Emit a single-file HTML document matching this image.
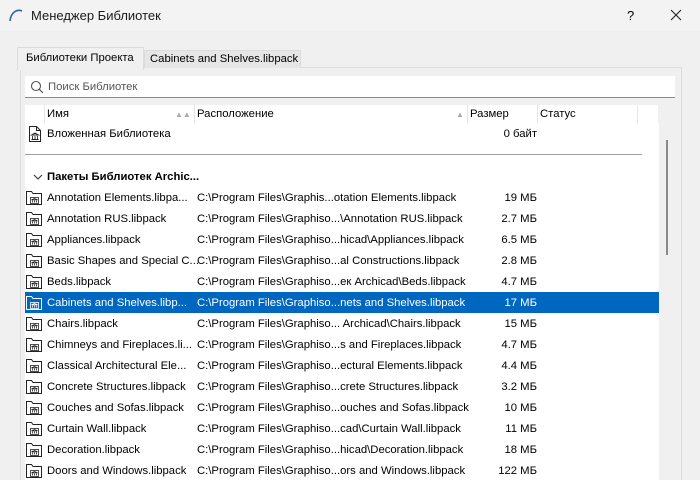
<!DOCTYPE html>
<html style="overflow:hidden;width:700px;height:480px"><head><meta charset="utf-8"><style>
*{margin:0;padding:0;box-sizing:border-box}
body{width:700px;height:480px;overflow:hidden;background:#f0f0f0;font-family:"Liberation Sans","DejaVu Sans",sans-serif;font-size:11.3px;color:#000;position:relative}
.abs{position:absolute}
.title{left:0;top:0;width:700px;height:31px;background:#f3f3f3}
.tt{left:31px;top:8px;font-size:13px;color:#1a1a1a}
.panel{left:20px;top:67px;width:662px;height:413px;border:1px solid #dcdcdc;border-bottom:none;background:#f0f0f0}
.tab{top:47px;height:22px;padding:4px 5px 0 5px;white-space:nowrap}
.search{left:25px;top:76px;width:650px;height:22px;background:#fff;border-bottom:1px solid #8a8a8a}
.hdr{left:25px;top:105px;width:633px;height:18px;background:#fff}
.hdr span{position:absolute;top:3px}
.sep{position:absolute;top:0;width:1px;height:18px;background:#e5e5e5}
.list{left:25px;top:123px;width:634px;height:357px;background:#fff;overflow:hidden}
.row{position:absolute;left:0;width:634px;height:21px;white-space:nowrap}
.row span{position:absolute;top:5px}
.n{left:22px}.l{left:172px}.s{right:122px;text-align:right}
.sel{background:#0067c0;color:#fff}
.ic{position:absolute;left:1px;top:3px}
</style></head><body>
<div class="abs title"></div>
<svg class="abs" style="left:8px;top:8px" width="16" height="14" viewBox="0 0 16 14"><path d="M2 13 C3 4 9 1 14 3" stroke="#2b5fb8" stroke-width="1.6" fill="none"/></svg>
<div class="abs tt">Менеджер Библиотек</div>
<div class="abs" style="left:627px;top:8px;font-size:13px">?</div>
<svg class="abs" style="left:670px;top:9px" width="12" height="12"><path d="M1 1L11 11M11 1L1 11" stroke="#222" stroke-width="1.1"/></svg>
<div class="abs panel"></div>
<div class="abs tab" style="left:17px;width:127px;background:#f0f0f0;border:1px solid #dcdcdc;border-bottom:none;height:23px;padding-left:8px">Библиотеки Проекта</div>
<div class="abs tab" style="left:144px;top:50px;height:18px;padding-top:2px;width:157px;background:#e6e6e6;border:1px solid #dcdcdc;border-bottom:none">Cabinets and Shelves.libpack</div>
<div class="abs search"></div>
<svg class="abs" style="left:30px;top:80px" width="14" height="14"><circle cx="6" cy="6" r="4.5" stroke="#555" fill="none" stroke-width="1.1"/><path d="M9.3 9.3L13 13" stroke="#555" stroke-width="1.2"/></svg>
<div class="abs" style="left:48px;top:81px;color:#555">Поиск Библиотек</div>
<div class="abs hdr">
<div class="sep" style="left:19px"></div><span style="left:22px">Имя</span><span style="left:150px;color:#aaa;font-size:8px;top:5px">▲▲</span>
<div class="sep" style="left:169px"></div><span style="left:172px">Расположение</span><span style="left:431px;color:#aaa;font-size:8px;top:5px">▲</span>
<div class="sep" style="left:442px"></div><span style="left:445px">Размер</span>
<div class="sep" style="left:512px"></div><span style="left:515px">Статус</span>
<div class="sep" style="left:612px"></div>
</div>
<div class="abs list">
<div class="row" style="top:0"><svg class="ic" width="16" height="16" style="left:3px"><path d="M1.5 0.5H8.5L12.5 4.5V15.5H1.5Z M8.5 0.5V4.5H12.5" fill="none" stroke="#222"/><path d="M3.5 9L7 7L10.5 9Z M4.5 10V13 M7 10V13 M9.5 10V13 M3.5 13.5H10.5" fill="none" stroke="#222" stroke-width="0.9"/></svg><span class="n">Вложенная Библиотека</span><span class="s">0 байт</span></div>
<div style="position:absolute;left:0;top:31px;width:617px;height:1px;background:#a0a0a0"></div>
<div class="row" style="top:43px"><svg class="ic" width="12" height="12" style="left:7px;top:5px"><path d="M2 4L6 8L10 4" stroke="#333" fill="none" stroke-width="1.1"/></svg><span class="n" style="font-weight:bold">Пакеты Библиотек Archic...</span></div>
<div id="rows"></div>
</div>
<div class="abs" style="left:666px;top:140px;width:2px;height:115px;background:#8a8a8a"></div>
<script>
var d=[["Annotation Elements.libpa...","C:\\Program Files\\Graphis...otation Elements.libpack","19 МБ"],
["Annotation RUS.libpack","C:\\Program Files\\Graphiso...\\Annotation RUS.libpack","2.7 МБ"],
["Appliances.libpack","C:\\Program Files\\Graphiso...hicad\\Appliances.libpack","6.5 МБ"],
["Basic Shapes and Special C...","C:\\Program Files\\Graphiso...al Constructions.libpack","2.8 МБ"],
["Beds.libpack","C:\\Program Files\\Graphiso...ек Archicad\\Beds.libpack","4.7 МБ"],
["Cabinets and Shelves.libp...","C:\\Program Files\\Graphiso...nets and Shelves.libpack","17 МБ"],
["Chairs.libpack","C:\\Program Files\\Graphiso... Archicad\\Chairs.libpack","15 МБ"],
["Chimneys and Fireplaces.li...","C:\\Program Files\\Graphiso...s and Fireplaces.libpack","4.7 МБ"],
["Classical Architectural Ele...","C:\\Program Files\\Graphiso...ectural Elements.libpack","4.4 МБ"],
["Concrete Structures.libpack","C:\\Program Files\\Graphiso...crete Structures.libpack","3.2 МБ"],
["Couches and Sofas.libpack","C:\\Program Files\\Graphiso...ouches and Sofas.libpack","10 МБ"],
["Curtain Wall.libpack","C:\\Program Files\\Graphiso...cad\\Curtain Wall.libpack","11 МБ"],
["Decoration.libpack","C:\\Program Files\\Graphiso...hicad\\Decoration.libpack","18 МБ"],
["Doors and Windows.libpack","C:\\Program Files\\Graphiso...ors and Windows.libpack","122 МБ"],
["Electrical.libpack","C:\\Program Files\\Graphiso...hicad\\Electrical.libpack","9 МБ"]];
var h="";d.forEach(function(r,i){var t=64+i*21;var s=i==5;var c=s?'#fff':'#222';
var ic='<svg class="ic" width="17" height="16"><path d="M0.5 1.5H5.5L7 3.5H15.5V14.5H0.5Z" fill="none" stroke="'+c+'"/><rect x="4.5" y="7.5" width="8" height="6" fill="none" stroke="'+c+'" stroke-width="0.8"/><path d="M5.5 9.8L8.5 8.5L11.5 9.8Z M6.5 10.5V12.5 M8.5 10.5V12.5 M10.5 10.5V12.5" fill="none" stroke="'+c+'" stroke-width="0.8"/></svg>';
h+='<div class="row'+(s?' sel':'')+'" style="top:'+t+'px">'+ic+'<span class="n">'+r[0]+'</span><span class="l">'+r[1]+'</span><span class="s">'+r[2]+'</span></div>';});
document.getElementById("rows").innerHTML=h;
</script>
</body></html>
